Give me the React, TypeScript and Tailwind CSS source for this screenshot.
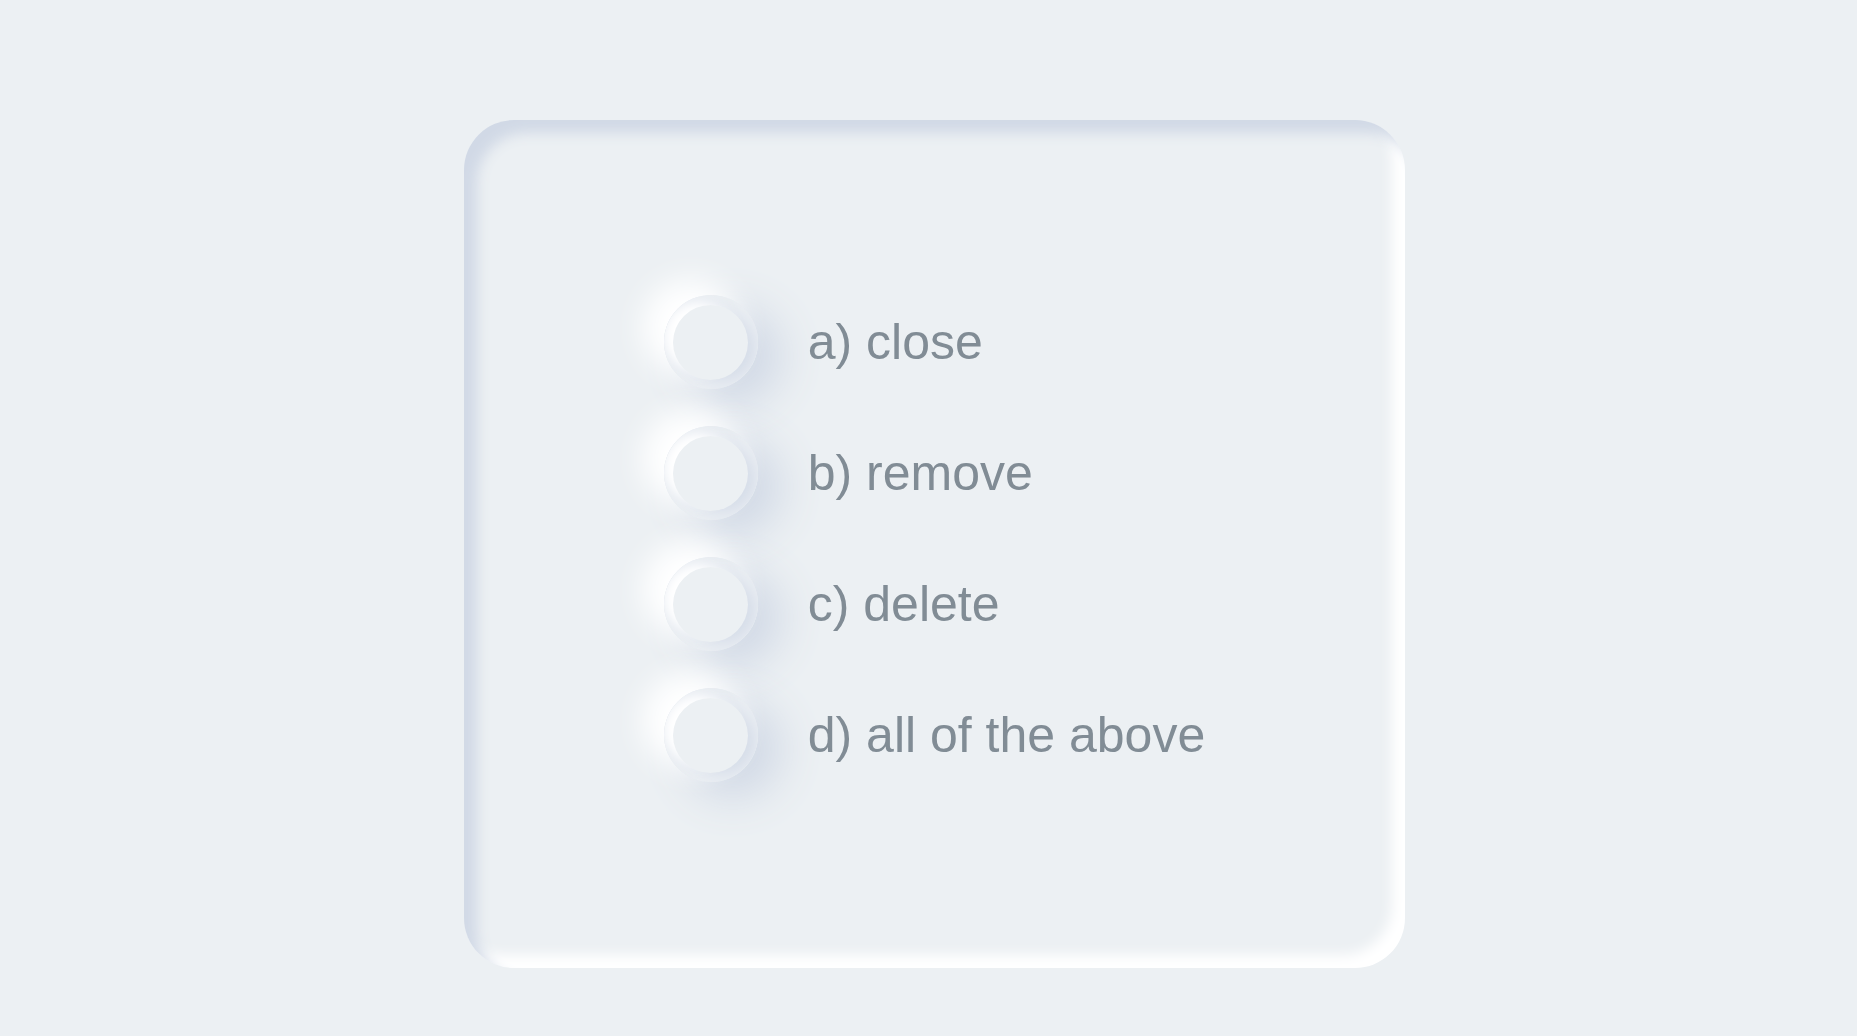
const options = [
  { id: 'close', label: 'a) close' },
  { id: 'remove', label: 'b) remove' },
  { id: 'delete', label: 'c) delete' },
  { id: 'all', label: 'd) all of the above' },
];

function RadioOption({ id, label }: { id: string; label: string }) {
  return (
    <label htmlFor={id} className="flex cursor-pointer items-center gap-[50px]">
      <input id={id} type="radio" name="action" value={id} className="peer sr-only" />
      <span className="grid size-[94px] shrink-0 place-items-center overflow-hidden rounded-full shadow-[-20px_-14px_30px_2px_#fff,22px_14px_44px_2px_#d1d9e6] peer-checked:[&>span]:scale-0">
        <span className="col-start-1 row-start-1 size-[75px] rounded-full shadow-[-13px_-6px_13px_0_#d1d9e6,13px_6px_25px_0_#fff]" />
        <span className="col-start-1 row-start-1 size-[75px] rounded-full bg-[#ecf0f3] shadow-[-13px_-6px_13px_0_#fff,13px_6px_25px_0_#d1d9e6] transition-transform" />
      </span>
      <span className="text-[#818c95]">{label}</span>
    </label>
  );
}

export default function App() {
  return (
    <main className="flex min-h-screen items-start justify-center bg-[#ecf0f3] pt-[120px] pb-[68px] pl-3 font-['Liberation_Sans',Arial,sans-serif] text-[50px] leading-none">
      <div
        role="radiogroup"
        aria-label="Choose an action"
        className="flex flex-col gap-[37px] rounded-[50px] px-[200px] pt-[175px] pb-[186px] shadow-[inset_13px_13px_13px_0_#d1d9e6,inset_-13px_-13px_13px_0_#fff]"
      >
        {options.map((option) => (
          <RadioOption key={option.id} id={option.id} label={option.label} />
        ))}
      </div>
    </main>
  );
}
